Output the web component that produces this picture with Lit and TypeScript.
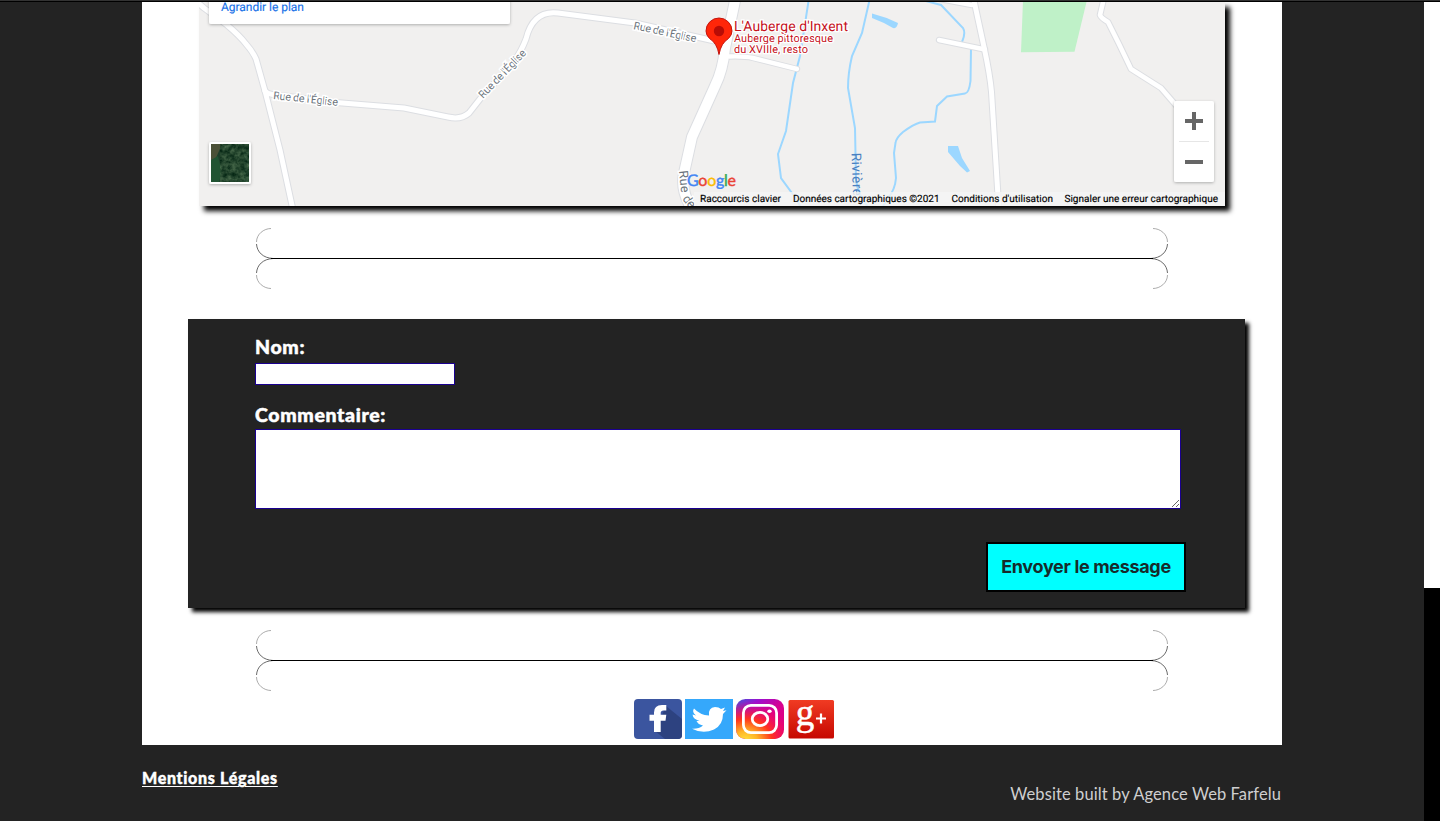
import { LitElement, html, svg, css } from "lit";
import { customElement } from "lit/decorators.js";

const ROADS: Array<[string, number]> = [
  ["M190 -4L204 8L227 25Q240 36 246 44Q253 52 256 59L265 91L280 150L293 210", 5],
  ["M265 91Q268 95 285 96L330 102L404 108L448 117Q461 120 469 113L480 99L513 63Q521 52 526 39Q533 10 558 13L635 23L719 42", 5],
  ["M729 56.5Q745 56 753 58L797 69", 4.4],
  ["M736 -4L725 48Q723 70 715 86L692 137L684 173Q680 192 694 212", 10],
  ["M940 -1L972 5", 4.4],
  ["M939 40L985 49.5", 4.4],
  ["M973 -4L984 47Q990 75 991.5 92L999 212", 5],
  ["M1104 -2L1100 15Q1101 18 1108 22L1119 44L1131 69L1161 88L1180 110", 4.6],
];

@customElement("map-view")
export class MapView extends LitElement {
  static styles = css`
    :host { display: block; width: 1026px; height: 204px; box-shadow: 5px 5px 5px #000; }
    svg { display: block; }
    text { font-family: Roboto, "Liberation Sans", sans-serif; text-rendering: geometricPrecision; }
    .road { font-size: 10.8px; fill: #6c747c; stroke: #fff; stroke-width: 3px; paint-order: stroke; }
    .wide { font-size: 12.5px; }
    .river { font-size: 13.5px; fill: #4a80c0; }
    .place { fill: #c5111c; stroke: #fff; stroke-width: 2.5px; paint-order: stroke; }
    .legal { font-size: 10px; fill: #000; stroke: #000; stroke-width: .15px; }
    .link { font-size: 12px; fill: #1a73e8; stroke: #1a73e8; stroke-width: .15px; }
    .google { font-family: Lato, sans-serif; font-size: 16px; stroke-width: .4px; }
    .blue { fill: #4285f4; stroke: #4285f4; }
    .red { fill: #ea4335; stroke: #ea4335; }
    .yellow { fill: #fbbc05; stroke: #fbbc05; }
    .green { fill: #34a853; stroke: #34a853; }
  `;

  render() {
    return html`<svg width="1026" height="204" viewBox="199 2 1026 204">
      <defs>
        <filter id="soft" x="-20%" y="-30%" width="140%" height="170%">
          <feDropShadow dx="0" dy="1" stdDeviation="1.5" flood-opacity=".28" />
        </filter>
        <filter id="trees" x="0" y="0" width="100%" height="100%" color-interpolation-filters="sRGB">
          <feTurbulence type="fractalNoise" baseFrequency=".22" numOctaves="3" seed="7" />
          <feColorMatrix values=".55 0 0 0 -.12  .55 0 0 0 .01  .45 0 0 0 -.04  0 0 0 0 .75" />
        </filter>
      </defs>
      <rect x="199" y="2" width="1026" height="204" fill="#f1f0ef" />
      <path d="M1023 0H1087L1074.5 51.8L1021 52.3Z" fill="#bff1c8" />
      <g fill="none" stroke="#9cd7ff" stroke-width="2">
        <path d="M809 -2L800 56L793 83L786 131L778 154L781 178L797 200L801 208" />
        <path d="M870 -2L862 33L852 56Q848 73 848 88L855 128L856 180Q858 195 868 207" />
        <path d="M922 0L941 5L963 28Q966 33 962 42M971 49L970.5 81Q969 93 965 93.5L947 96.5L937 106L935 121.5L920 122.5Q914 124 903 132Q896 138 895.5 143L894 153L896 178Q895 190 888 198L882 208" />
      </g>
      <g fill="#9cd7ff">
        <path d="M872 13.5Q886 17 898 23Q897 29 893 28Q883 22 872 18Z" />
        <path d="M948 146H958L962 158L970 171L967 172.5L960 166L948 152Z" />
      </g>
      <g fill="none" stroke-linecap="round" stroke-linejoin="round">
        ${ROADS.map(([d, w]) => svg`<path d=${d} stroke="#dcdee2" stroke-width=${w + 2} />`)}
        ${ROADS.map(([d, w]) => svg`<path d=${d} stroke="#fff" stroke-width=${w} />`)}
      </g>
      <text class="road" transform="translate(273 99) rotate(6)" textLength="65">Rue de l'Église</text>
      <text class="road" transform="translate(483 99) rotate(-46)" textLength="63">Rue de l'Église</text>
      <text class="road" transform="translate(633 29) rotate(12)" textLength="64">Rue de l'Église</text>
      <text class="road wide" transform="translate(679 171) rotate(84)" textLength="22">Rue</text>
      <text class="road wide" transform="translate(682 199) rotate(52)" textLength="13">de</text>
      <text class="river" transform="translate(851.5 153) rotate(88)" textLength="43">Rivière</text>

      <rect x="209" y="-20" width="301" height="44" rx="2" fill="#fff" filter="url(#soft)" />
      <text class="link" x="221" y="11" textLength="83">Agrandir le plan</text>

      <path d="M719 54.5Q717 43 709.5 38.5Q706 35 706 31A13 13 0 0 1 732 31Q732 35 728.5 38.5Q721 43 719 54.5Z" fill="#ff2609" stroke="#c5130c" />
      <circle cx="719" cy="31" r="5.2" fill="#b80c06" />
      <text class="place" x="734" y="31" font-size="14" textLength="114">L'Auberge d'Inxent</text>
      <text class="place" x="734" y="42" font-size="11" textLength="99">Auberge pittoresque</text>
      <text class="place" x="734" y="52.5" font-size="11" textLength="74">du XVIIIe, resto</text>

      <rect x="209" y="142" width="42" height="42" rx="2" fill="#fff" filter="url(#soft)" />
      <rect x="211" y="144" width="38" height="38" fill="#1d3e2a" />
      <path d="M211 144H222L216 158L211 162Z" fill="#4b5137" />
      <path d="M211 160L218 156L222 172L219 182H211Z" fill="#205332" />
      <path d="M244 152H249V182H243Z" fill="#19402f" />
      <rect x="220" y="144" width="29" height="38" filter="url(#trees)" />

      <text class="google" x="687" y="185.5" textLength="49"><tspan class="blue">G</tspan><tspan class="red">o</tspan><tspan class="yellow">o</tspan><tspan class="blue">g</tspan><tspan class="green">l</tspan><tspan class="red">e</tspan></text>

      <rect x="694" y="192" width="531" height="14" fill="#f5f5f5" opacity=".8" />
      <text class="legal" x="700" y="202" textLength="81">Raccourcis clavier</text>
      <text class="legal" x="793" y="202" textLength="146.5">Données cartographiques ©2021</text>
      <text class="legal" x="951.5" y="202" textLength="101.5">Conditions d'utilisation</text>
      <text class="legal" x="1064.5" y="202" textLength="153.5">Signaler une erreur cartographique</text>

      <rect x="1174" y="101" width="40" height="81" rx="2" fill="#fff" filter="url(#soft)" />
      <path d="M1179 141.5H1209" stroke="#e6e6e6" />
      <path d="M1185 121H1203M1194 112V130M1185 162H1203" stroke="#666" stroke-width="4" />
    </svg>`;
  }
}

@customElement("scroll-divider")
export class ScrollDivider extends LitElement {
  static styles = css`
    :host { display: block; width: 912px; height: 61px; }
    svg { display: block; }
  `;

  render() {
    const side = svg`
      <path d="M15 .5C8 .5 .5 6 .5 14" stroke="#888" stroke-width=".7" />
      <path d="M.5 16C1 24 7 30 17 30.5" stroke="#444" stroke-width=".8" />
      <path d="M17 30.5C7 31 1 37 .5 45" stroke="#444" stroke-width=".8" />
      <path d="M.5 47C.5 55 8 60.5 15 60.5" stroke="#888" stroke-width=".7" />`;
    return html`<svg width="912" height="61" fill="none">
      ${side}
      <g transform="translate(912 0) scale(-1 1)">${side}</g>
      <path d="M15 30.5H897" stroke="#000" stroke-width="1" />
    </svg>`;
  }
}

@customElement("social-links")
export class SocialLinks extends LitElement {
  static styles = css`
    :host { display: flex; gap: 3px; height: 40px; }
    svg { display: block; }
    text { font: 37px "Liberation Serif", serif; fill: #fff; stroke: #fff; stroke-width: .5px; }
  `;

  render() {
    return html`
      <svg width="48" height="40" viewBox="0 0 48 40">
        <rect width="48" height="40" rx="4" fill="#3b559f" />
        <path d="M32 7L48 20V36Q48 40 44 40H31L21 32Z" fill="#2d4280" />
        <path d="M20 33V21.7H15.5V15.8H20V13.5Q20 6 28 6H32.3V11.5H29.5Q26.7 11.5 26.7 14V15.8H32.3L31.5 21.7H26.7V33Z" fill="#fff" />
      </svg>
      <svg width="48" height="40" viewBox="0 0 48 40">
        <rect width="48" height="40" fill="#35a8fb" />
        <path d="M9 9.5Q15 16 24 16.5Q23 8.5 30 8Q34 8 36 10L40 8.5L38 12L41.5 11.2L38 15Q38 26 29 30.5Q18 35.5 7 29.7Q14 30 18 26.5Q13 25.5 11.5 22H14.5Q8 20 7.5 15.5L11 16.5Q6.5 13 9 9.5Z" fill="#fff" />
      </svg>
      <svg width="48" height="40" viewBox="0 0 48 40">
        <defs>
          <linearGradient id="sky" x1="0" y1="0" x2="1" y2="1">
            <stop offset="0" stop-color="#4257d8" /><stop offset=".25" stop-color="#9c10cf" />
            <stop offset=".55" stop-color="#d9008e" /><stop offset="1" stop-color="#e0007c" />
          </linearGradient>
          <radialGradient id="sun" cx=".2" cy="1.05" r="1">
            <stop offset="0" stop-color="#ffe43f" /><stop offset=".25" stop-color="#ffb428" />
            <stop offset=".55" stop-color="#ff351d" /><stop offset="1" stop-color="#ff0060" stop-opacity="0" />
          </radialGradient>
        </defs>
        <rect width="48" height="40" rx="9.5" fill="url(#sky)" />
        <rect width="48" height="40" rx="9.5" fill="url(#sun)" />
        <g fill="none" stroke="#fff" stroke-width="2.8">
          <rect x="7.4" y="6.4" width="33.2" height="27.2" rx="7.5" />
          <ellipse cx="24" cy="20" rx="7.8" ry="6.6" />
        </g>
        <ellipse cx="33.5" cy="12.3" rx="2.2" ry="1.8" fill="#fff" />
      </svg>
      <svg width="48" height="40" viewBox="0 0 48 40">
        <defs>
          <linearGradient id="red" x2="0" y2="1">
            <stop offset="0" stop-color="#f03b23" /><stop offset="1" stop-color="#c60800" />
          </linearGradient>
        </defs>
        <rect x="1.5" y="1" width="45.5" height="38.5" rx="1.5" fill="url(#red)" />
        <text x="8.8" y="25.6">g</text>
        <path d="M29 19.5H39M34 14.5V24.5" fill="none" stroke="#fff" stroke-width="2.2" />
      </svg>`;
  }
}

@customElement("app-root")
export class AppRoot extends LitElement {
  static styles = css`
    :host { display: block; height: 821px; overflow: hidden; font-family: Lato, sans-serif; }
    * { box-sizing: border-box; }
    .window { display: grid; grid-template-rows: 2px 819px; height: 821px; background: #232323; }
    .edge { background: linear-gradient(#333 50%, #000 50%); }
    .view { display: grid; grid-template-columns: 1424px 16px; }
    .page { padding: 0 142px; }
    .content { height: 743px; background: #fff; }
    .map { margin-left: 57px; }
    .divider { margin-left: 114px; }
    .first { margin-top: 22px; }
    .second { margin-top: 22px; }
    .panel { display: flex; flex-direction: column; width: 1057px; height: 289px; margin: 30px 0 0 46px; padding: 16px 59px 16px 67px; background: #232323; box-shadow: 4px 4px 4px #000; color: #fff; }
    label { flex: none; height: 24px; font-size: 19.5px; line-height: 24px; font-weight: 900; letter-spacing: .65px; -webkit-text-stroke: .5px #fff; }
    input, textarea { display: block; flex: none; margin: 0; padding: 2px; border: 1px solid #1a0090; border-radius: 0; background: #fff; outline: none; }
    input { width: 200px; height: 22px; margin: 4px 0 18px; }
    textarea { width: 926px; height: 80px; margin-top: 2px; resize: both; }
    button { align-self: flex-end; flex: none; width: 200px; height: 50px; margin-top: 33px; padding: 0; border: 2px solid #000; border-radius: 0; background: #0ff; color: #162b2b; font: 700 18px/46px Inter, sans-serif; letter-spacing: -.33px; white-space: nowrap; }
    .social { margin: 8px 0 0 492px; }
    .footer { display: flex; justify-content: space-between; height: 76px; padding-top: 22px; }
    .legal { color: #fff; font-size: 16px; line-height: 22px; font-weight: 900; letter-spacing: .68px; -webkit-text-stroke: .4px #fff; text-underline-offset: 2px; text-decoration-thickness: 1px; }
    .credit { padding: 16px 1px 0 0; color: #cfcfcf; font-size: 16.5px; line-height: 23px; letter-spacing: .1px; }
    .scrollbar { background: #fff; padding-top: 586px; }
    .thumb { height: 233px; background: #000; }
  `;

  render() {
    return html`
      <div class="window">
        <div class="edge"></div>
        <div class="view">
          <div class="page">
            <main class="content">
              <map-view class="map"></map-view>
              <scroll-divider class="divider first"></scroll-divider>
              <form class="panel" @submit=${(e: Event) => e.preventDefault()}>
                <label for="name">Nom:</label>
                <input id="name" type="text" />
                <label for="comment">Commentaire:</label>
                <textarea id="comment"></textarea>
                <button type="submit">Envoyer le message</button>
              </form>
              <scroll-divider class="divider second"></scroll-divider>
              <social-links class="social"></social-links>
            </main>
            <footer class="footer">
              <a class="legal" href="#">Mentions Légales</a>
              <span class="credit">Website built by Agence Web Farfelu</span>
            </footer>
          </div>
          <div class="scrollbar"><div class="thumb"></div></div>
        </div>
      </div>`;
  }
}
